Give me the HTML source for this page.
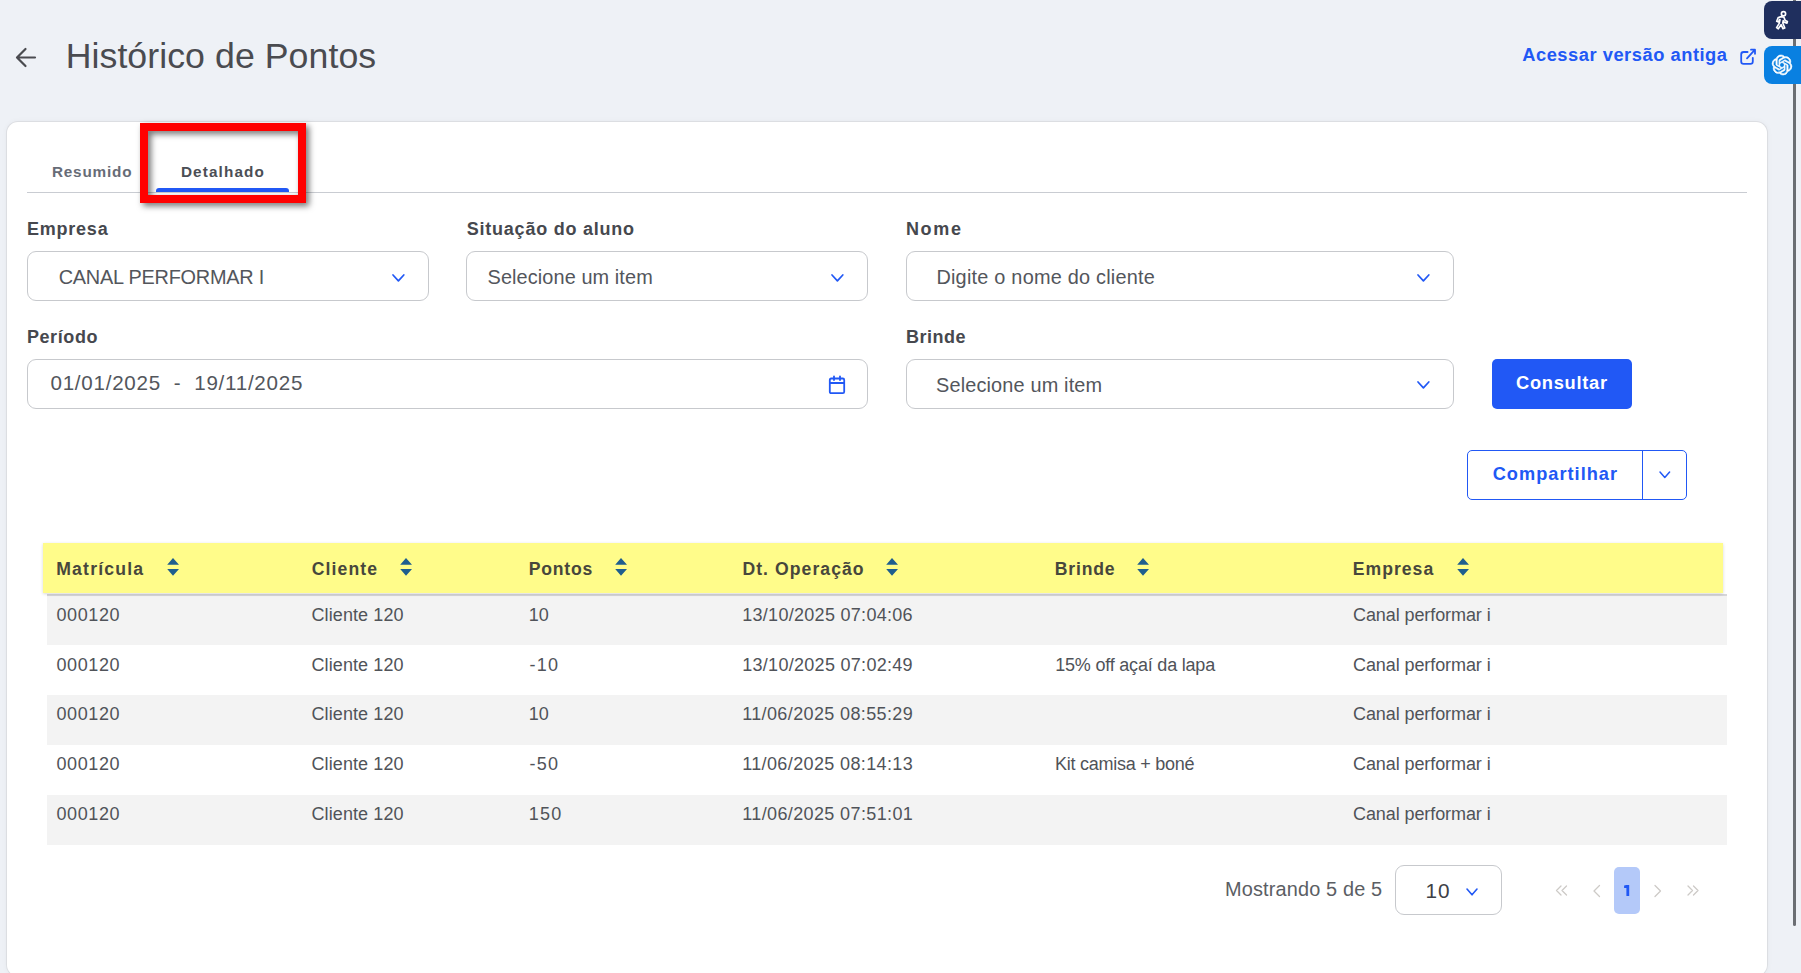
<!DOCTYPE html>
<html><head><meta charset="utf-8"><title>Histórico de Pontos</title>
<style>
html,body{margin:0;padding:0;width:1801px;height:973px;overflow:hidden;background:#eef1f6;}
body{position:relative;font-family:"Liberation Sans",sans-serif;}
.t{position:absolute;white-space:nowrap;}
.a{position:absolute;overflow:visible;}
.b{position:absolute;box-sizing:border-box;}
</style></head><body>
<!-- scrollbar -->
<div class="b" style="left:1793px;top:-4px;width:3.2px;height:930px;background:#6b6e73;border-radius:2px;"></div>
<!-- side widgets -->
<div class="b" style="left:1764px;top:1px;width:50px;height:38px;background:#1f2f5e;border-radius:8px;"></div>
<div class="b" style="left:1764px;top:46px;width:50px;height:38px;background:#0980e1;border-radius:8px;"></div>
<svg class="a" style="left:1770px;top:11px" width="24" height="20" viewBox="0 0 24 20">
 <circle cx="13.5" cy="2.8" r="2.1" fill="none" stroke="#fff" stroke-width="1.7"/>
 <path d="M11.2 5.6 L8.2 6.6 L6.7 10.2 L8.4 10.9 L9.6 8.6 L10 8.5 L9.2 12.4 L6.6 16.6 L8.3 17.8 L11.1 13.6 L12.9 17.6 L14.8 17 L12.8 12 L13.2 9.6 L14.1 11.2 L17 12.1 L17.4 10.5 L15.3 9.6 L13.9 6.3 Z" fill="#1f2f5e" stroke="#fff" stroke-width="1.65" stroke-linejoin="round"/>
</svg>
<svg class="a" style="left:1772px;top:55px" width="20" height="20" viewBox="0 0 24 24"><path fill="#fff" stroke="#fff" stroke-width="0.7" d="M22.2819 9.8211a5.9847 5.9847 0 0 0-.5157-4.9108 6.0462 6.0462 0 0 0-6.5098-2.9A6.0651 6.0651 0 0 0 4.9807 4.1818a5.9847 5.9847 0 0 0-3.9977 2.9 6.0462 6.0462 0 0 0 .7427 7.0966 5.98 5.98 0 0 0 .511 4.9107 6.051 6.051 0 0 0 6.5146 2.9001A5.9847 5.9847 0 0 0 13.2599 24a6.0557 6.0557 0 0 0 5.7718-4.2058 5.9894 5.9894 0 0 0 3.9977-2.9001 6.0557 6.0557 0 0 0-.7475-7.0729zm-9.022 12.6081a4.4755 4.4755 0 0 1-2.8764-1.0408l.1419-.0804 4.7783-2.7582a.7948.7948 0 0 0 .3927-.6813v-6.7369l2.02 1.1686a.071.071 0 0 1 .038.052v5.5826a4.504 4.504 0 0 1-4.4945 4.4944zm-9.6607-4.1254a4.4708 4.4708 0 0 1-.5346-3.0137l.142.0852 4.783 2.7582a.7712.7712 0 0 0 .7806 0l5.8428-3.3685v2.3324a.0804.0804 0 0 1-.0332.0615L9.74 19.9502a4.4992 4.4992 0 0 1-6.1408-1.6464zM2.3408 7.8956a4.485 4.485 0 0 1 2.3655-1.9728V11.6a.7664.7664 0 0 0 .3879.6765l5.8144 3.3543-2.0201 1.1685a.0757.0757 0 0 1-.071 0l-4.8303-2.7865A4.504 4.504 0 0 1 2.3408 7.872zm16.5963 3.8558L13.1038 8.364 15.1192 7.2a.0757.0757 0 0 1 .071 0l4.8303 2.7913a4.4944 4.4944 0 0 1-.6765 8.1042v-5.6772a.79.79 0 0 0-.407-.667zm2.0107-3.0231l-.142-.0852-4.7735-2.7818a.7759.7759 0 0 0-.7854 0L9.409 9.2297V6.8974a.0662.0662 0 0 1 .0284-.0615l4.8303-2.7866a4.4992 4.4992 0 0 1 6.6802 4.66zM8.3065 12.863l-2.02-1.1638a.0804.0804 0 0 1-.038-.0567V6.0742a4.4992 4.4992 0 0 1 7.3757-3.4537l-.142.0805L8.704 5.459a.7948.7948 0 0 0-.3927.6813zm1.0976-2.3654l2.602-1.4998 2.6069 1.4998v2.9994l-2.5974 1.4997-2.6067-1.4997Z"/></svg>
<!-- back arrow -->
<svg class="a" style="left:14px;top:46px" width="24" height="24"><path d="M21 11.5 H3.2 M11.5 3 L3 11.5 L11.5 20" fill="none" stroke="#4a4b50" stroke-width="2.2" stroke-linecap="round" stroke-linejoin="round"/></svg>
<!-- external link icon -->
<svg class="a" style="left:1739px;top:48px" width="19" height="19"><path d="M8.6 4 H4.6 Q2.2 4 2.2 6.4 V13.5 Q2.2 15.9 4.6 15.9 H11.4 Q13.8 15.9 13.8 13.5 V9.8 M12 1.7 H16 V5.8 M16 1.7 L8 10.3" fill="none" stroke="#2158f5" stroke-width="1.8" stroke-linecap="round" stroke-linejoin="round"/></svg>
<!-- card -->
<div class="b" style="left:7px;top:122px;width:1760px;height:854px;background:#fff;border-radius:11px;box-shadow:0 0 0 1px #dcdee2, 0 0 6px rgba(0,0,0,0.05);"></div>
<!-- tabs -->
<div class="b" style="left:27px;top:192px;width:1720px;height:1px;background:#c9ccd2;"></div>
<div class="b" style="left:156px;top:188px;width:133px;height:4px;background:#2158f5;border-radius:3px 3px 0 0;"></div>
<!-- selects -->
<div class="b" style="left:27px;top:251px;width:402px;height:50px;border:1px solid #c7c9cd;border-radius:9px;"></div>
<div class="b" style="left:466px;top:251px;width:402px;height:50px;border:1px solid #c7c9cd;border-radius:9px;"></div>
<div class="b" style="left:906px;top:251px;width:548px;height:50px;border:1px solid #c7c9cd;border-radius:9px;"></div>
<div class="b" style="left:27px;top:359px;width:841px;height:50px;border:1px solid #c7c9cd;border-radius:9px;"></div>
<div class="b" style="left:906px;top:359px;width:548px;height:50px;border:1px solid #c7c9cd;border-radius:9px;"></div>
<!-- calendar -->
<svg class="a" style="left:828px;top:375px" width="19" height="20"><path d="M3.2 3.5 H14.8 Q16.2 3.5 16.2 5 V16.8 Q16.2 18.2 14.8 18.2 H3.2 Q1.8 18.2 1.8 16.8 V5 Q1.8 3.5 3.2 3.5 Z M1.8 8 H16.2 M6 1.3 V5 M12 1.3 V5" fill="none" stroke="#2158f5" stroke-width="1.8" stroke-linecap="round"/></svg>
<!-- buttons -->
<div class="b" style="left:1492px;top:359px;width:140px;height:50px;background:#2158f5;border-radius:5px;"></div>
<div class="b" style="left:1467px;top:450px;width:220px;height:50px;border:1px solid #2158f5;border-radius:5px;"></div>
<div class="b" style="left:1642px;top:450px;width:1px;height:50px;background:#2158f5;"></div>
<!-- table -->
<div class="b" style="left:47px;top:595px;width:1680px;height:50px;background:#f3f3f3;"></div>
<div class="b" style="left:47px;top:695px;width:1680px;height:50px;background:#f3f3f3;"></div>
<div class="b" style="left:47px;top:795px;width:1680px;height:50px;background:#f3f3f3;"></div>
<div class="b" style="left:47px;top:594px;width:1680px;height:2px;background:#d6d6d9;"></div>
<div class="b" style="left:43px;top:543px;width:1680px;height:50px;background:#fffc8a;box-shadow:0 1px 3px rgba(0,0,0,0.16);"></div>
<!-- pagination -->
<div class="b" style="left:1395px;top:865px;width:106.5px;height:50px;border:1px solid #c7c9cd;border-radius:9px;"></div>
<div class="b" style="left:1614px;top:867px;width:26px;height:47px;background:#b4c9f9;border-radius:5px;"></div>
<svg class="a" style="left:1554px;top:884px" width="150" height="14" fill="none" stroke="#cdcac7" stroke-width="1.3" stroke-linecap="round" stroke-linejoin="round">
 <path d="M7 2 L2.5 6.5 L7 11 M12.5 2 L8 6.5 L12.5 11"/>
 <path d="M45.5 1.5 L40 7 L45.5 12.5"/>
 <path d="M101 1.5 L106.5 7 L101 12.5"/>
 <path d="M134 2 L138.5 6.5 L134 11 M139.5 2 L144 6.5 L139.5 11"/>
</svg>
<svg class="a" style="left:390.60px;top:272.65px" width="14.80" height="9.90"><path d="M2 2 L7.40 7.90 L12.80 2" fill="none" stroke="#2158f5" stroke-width="1.7" stroke-linecap="round" stroke-linejoin="round"/></svg><svg class="a" style="left:830.10px;top:272.65px" width="14.80" height="9.90"><path d="M2 2 L7.40 7.90 L12.80 2" fill="none" stroke="#2158f5" stroke-width="1.7" stroke-linecap="round" stroke-linejoin="round"/></svg><svg class="a" style="left:1415.80px;top:272.65px" width="14.80" height="9.90"><path d="M2 2 L7.40 7.90 L12.80 2" fill="none" stroke="#2158f5" stroke-width="1.7" stroke-linecap="round" stroke-linejoin="round"/></svg><svg class="a" style="left:1415.80px;top:380.35px" width="14.80" height="9.90"><path d="M2 2 L7.40 7.90 L12.80 2" fill="none" stroke="#2158f5" stroke-width="1.7" stroke-linecap="round" stroke-linejoin="round"/></svg><svg class="a" style="left:1658.40px;top:469.70px" width="13.60" height="9.40"><path d="M2 2 L6.80 7.40 L11.60 2" fill="none" stroke="#2158f5" stroke-width="1.5" stroke-linecap="round" stroke-linejoin="round"/></svg><svg class="a" style="left:1464.50px;top:886.70px" width="14.00" height="9.80"><path d="M2 2 L7.00 7.80 L12.00 2" fill="none" stroke="#2158f5" stroke-width="1.6" stroke-linecap="round" stroke-linejoin="round"/></svg><svg class="a" style="left:167.2px;top:557px" width="13" height="20"><path d="M6 1 L12 7.8 L0.2 7.8 Z M0.2 12 L12 12 L6 18.8 Z" fill="#1f5e8e"/></svg><svg class="a" style="left:400px;top:557px" width="13" height="20"><path d="M6 1 L12 7.8 L0.2 7.8 Z M0.2 12 L12 12 L6 18.8 Z" fill="#1f5e8e"/></svg><svg class="a" style="left:615px;top:557px" width="13" height="20"><path d="M6 1 L12 7.8 L0.2 7.8 Z M0.2 12 L12 12 L6 18.8 Z" fill="#1f5e8e"/></svg><svg class="a" style="left:886px;top:557px" width="13" height="20"><path d="M6 1 L12 7.8 L0.2 7.8 Z M0.2 12 L12 12 L6 18.8 Z" fill="#1f5e8e"/></svg><svg class="a" style="left:1137.4px;top:557px" width="13" height="20"><path d="M6 1 L12 7.8 L0.2 7.8 Z M0.2 12 L12 12 L6 18.8 Z" fill="#1f5e8e"/></svg><svg class="a" style="left:1456.7px;top:557px" width="13" height="20"><path d="M6 1 L12 7.8 L0.2 7.8 Z M0.2 12 L12 12 L6 18.8 Z" fill="#1f5e8e"/></svg>
<svg class="a" style="left:1620px;top:880px" width="14" height="20"><path d="M4.1 5.6 L6.4 5 H9.2 V16 H6.4 V7.9 H4.1 Z" fill="#2158f5"/></svg>
<!-- red annotation -->
<div class="b" style="left:140px;top:123px;width:166px;height:80px;border:8px solid #ff0000;filter:drop-shadow(3px 3px 3px rgba(0,0,0,0.55));"></div>
<div class="t" style="left:65.70px;top:36.00px;font-size:35.7px;line-height:40px;letter-spacing:0.056px;color:#4a4b50;font-weight:400;">Histórico de Pontos</div><div class="t" style="left:1522.20px;top:43.30px;font-size:18.3px;line-height:23px;letter-spacing:0.535px;color:#2158f5;font-weight:700;">Acessar versão antiga</div><div class="t" style="left:51.90px;top:162.30px;font-size:15.3px;line-height:20px;letter-spacing:0.814px;color:#676c77;font-weight:700;">Resumido</div><div class="t" style="left:180.90px;top:162.20px;font-size:15.3px;line-height:20px;letter-spacing:1.138px;color:#4b4e55;font-weight:700;">Detalhado</div><div class="t" style="left:27.10px;top:218.20px;font-size:18px;line-height:22px;letter-spacing:0.750px;color:#46484e;font-weight:700;">Empresa</div><div class="t" style="left:466.80px;top:218.10px;font-size:18px;line-height:22px;letter-spacing:0.762px;color:#46484e;font-weight:700;">Situação do aluno</div><div class="t" style="left:905.90px;top:218.10px;font-size:18px;line-height:22px;letter-spacing:1.700px;color:#46484e;font-weight:700;">Nome</div><div class="t" style="left:26.90px;top:325.80px;font-size:18px;line-height:22px;letter-spacing:0.600px;color:#46484e;font-weight:700;">Período</div><div class="t" style="left:905.90px;top:325.80px;font-size:18px;line-height:22px;letter-spacing:0.520px;color:#46484e;font-weight:700;">Brinde</div><div class="t" style="left:58.70px;top:264.80px;font-size:19.9px;line-height:24px;letter-spacing:-0.225px;color:#53565c;font-weight:400;">CANAL PERFORMAR I</div><div class="t" style="left:487.60px;top:264.80px;font-size:19.9px;line-height:24px;letter-spacing:0.094px;color:#53565c;font-weight:400;">Selecione um item</div><div class="t" style="left:936.40px;top:264.80px;font-size:19.9px;line-height:24px;letter-spacing:0.222px;color:#53565c;font-weight:400;">Digite o nome do cliente</div><div class="t" style="left:936.00px;top:373.00px;font-size:19.9px;line-height:24px;letter-spacing:0.156px;color:#53565c;font-weight:400;">Selecione um item</div><div class="t" style="left:50.50px;top:369.70px;font-size:20.6px;line-height:25px;letter-spacing:0.729px;color:#53565c;font-weight:400;white-space:pre;">01/01/2025  -  19/11/2025</div><div class="t" style="left:1516.00px;top:371.00px;font-size:18.3px;line-height:23px;letter-spacing:0.725px;color:#ffffff;font-weight:700;">Consultar</div><div class="t" style="left:1492.70px;top:463.30px;font-size:18.2px;line-height:23px;letter-spacing:1.018px;color:#2158f5;font-weight:700;">Compartilhar</div><div class="t" style="left:56.20px;top:557.80px;font-size:17.6px;line-height:22px;letter-spacing:1.213px;color:#47473c;font-weight:700;">Matrícula</div><div class="t" style="left:311.70px;top:557.80px;font-size:17.6px;line-height:22px;letter-spacing:1.133px;color:#47473c;font-weight:700;">Cliente</div><div class="t" style="left:528.80px;top:557.80px;font-size:17.6px;line-height:22px;letter-spacing:0.760px;color:#47473c;font-weight:700;">Pontos</div><div class="t" style="left:742.40px;top:557.80px;font-size:17.6px;line-height:22px;letter-spacing:1.064px;color:#47473c;font-weight:700;">Dt. Operação</div><div class="t" style="left:1054.80px;top:557.80px;font-size:17.6px;line-height:22px;letter-spacing:0.820px;color:#47473c;font-weight:700;">Brinde</div><div class="t" style="left:1352.70px;top:557.80px;font-size:17.6px;line-height:22px;letter-spacing:1.033px;color:#47473c;font-weight:700;">Empresa</div><div class="t" style="left:56.50px;top:604.00px;font-size:18px;line-height:22px;letter-spacing:0.600px;color:#505359;font-weight:400;">000120</div><div class="t" style="left:311.50px;top:604.00px;font-size:18px;line-height:22px;letter-spacing:0.100px;color:#505359;font-weight:400;">Cliente 120</div><div class="t" style="left:528.80px;top:604.00px;font-size:18px;line-height:22px;letter-spacing:0.000px;color:#505359;font-weight:400;">10</div><div class="t" style="left:742.20px;top:604.00px;font-size:18px;line-height:22px;letter-spacing:0.294px;color:#505359;font-weight:400;">13/10/2025 07:04:06</div><div class="t" style="left:1353.00px;top:604.00px;font-size:18px;line-height:22px;letter-spacing:-0.088px;color:#505359;font-weight:400;">Canal performar i</div><div class="t" style="left:56.50px;top:653.70px;font-size:18px;line-height:22px;letter-spacing:0.600px;color:#505359;font-weight:400;">000120</div><div class="t" style="left:311.50px;top:653.70px;font-size:18px;line-height:22px;letter-spacing:0.100px;color:#505359;font-weight:400;">Cliente 120</div><div class="t" style="left:529.40px;top:653.70px;font-size:18px;line-height:22px;letter-spacing:1.350px;color:#505359;font-weight:400;">-10</div><div class="t" style="left:742.20px;top:653.70px;font-size:18px;line-height:22px;letter-spacing:0.294px;color:#505359;font-weight:400;">13/10/2025 07:02:49</div><div class="t" style="left:1055.20px;top:653.70px;font-size:18px;line-height:22px;letter-spacing:-0.200px;color:#505359;font-weight:400;">15% off açaí da lapa</div><div class="t" style="left:1353.00px;top:653.70px;font-size:18px;line-height:22px;letter-spacing:-0.088px;color:#505359;font-weight:400;">Canal performar i</div><div class="t" style="left:56.50px;top:703.40px;font-size:18px;line-height:22px;letter-spacing:0.600px;color:#505359;font-weight:400;">000120</div><div class="t" style="left:311.50px;top:703.40px;font-size:18px;line-height:22px;letter-spacing:0.100px;color:#505359;font-weight:400;">Cliente 120</div><div class="t" style="left:528.80px;top:703.40px;font-size:18px;line-height:22px;letter-spacing:0.000px;color:#505359;font-weight:400;">10</div><div class="t" style="left:742.20px;top:703.40px;font-size:18px;line-height:22px;letter-spacing:0.372px;color:#505359;font-weight:400;">11/06/2025 08:55:29</div><div class="t" style="left:1353.00px;top:703.40px;font-size:18px;line-height:22px;letter-spacing:-0.088px;color:#505359;font-weight:400;">Canal performar i</div><div class="t" style="left:56.50px;top:753.10px;font-size:18px;line-height:22px;letter-spacing:0.600px;color:#505359;font-weight:400;">000120</div><div class="t" style="left:311.50px;top:753.10px;font-size:18px;line-height:22px;letter-spacing:0.100px;color:#505359;font-weight:400;">Cliente 120</div><div class="t" style="left:529.40px;top:753.10px;font-size:18px;line-height:22px;letter-spacing:1.350px;color:#505359;font-weight:400;">-50</div><div class="t" style="left:742.20px;top:753.10px;font-size:18px;line-height:22px;letter-spacing:0.372px;color:#505359;font-weight:400;">11/06/2025 08:14:13</div><div class="t" style="left:1055.10px;top:753.10px;font-size:18px;line-height:22px;letter-spacing:-0.263px;color:#505359;font-weight:400;">Kit camisa + boné</div><div class="t" style="left:1353.00px;top:753.10px;font-size:18px;line-height:22px;letter-spacing:-0.088px;color:#505359;font-weight:400;">Canal performar i</div><div class="t" style="left:56.50px;top:802.80px;font-size:18px;line-height:22px;letter-spacing:0.600px;color:#505359;font-weight:400;">000120</div><div class="t" style="left:311.50px;top:802.80px;font-size:18px;line-height:22px;letter-spacing:0.100px;color:#505359;font-weight:400;">Cliente 120</div><div class="t" style="left:528.80px;top:802.80px;font-size:18px;line-height:22px;letter-spacing:1.250px;color:#505359;font-weight:400;">150</div><div class="t" style="left:742.20px;top:802.80px;font-size:18px;line-height:22px;letter-spacing:0.378px;color:#505359;font-weight:400;">11/06/2025 07:51:01</div><div class="t" style="left:1353.00px;top:802.80px;font-size:18px;line-height:22px;letter-spacing:-0.088px;color:#505359;font-weight:400;">Canal performar i</div><div class="t" style="left:1225.10px;top:877.10px;font-size:19.9px;line-height:24px;letter-spacing:0.147px;color:#5b5e64;font-weight:400;">Mostrando 5 de 5</div><div class="t" style="left:1425.60px;top:878.20px;font-size:20.8px;line-height:25px;letter-spacing:0.900px;color:#3d4046;font-weight:400;">10</div>
</body></html>
